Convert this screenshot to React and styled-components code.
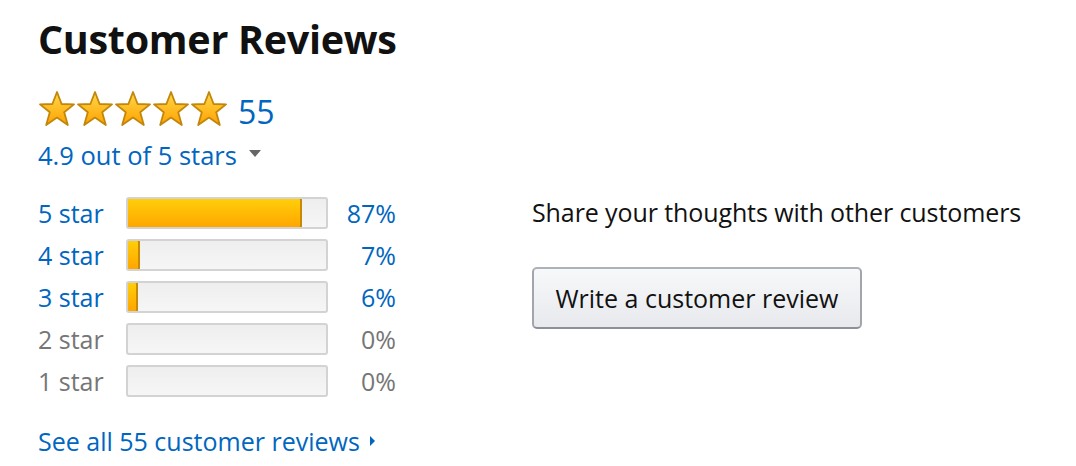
import React from 'react'
import styled, { createGlobalStyle } from 'styled-components'

const GlobalStyle = createGlobalStyle`
  body {
    margin: 0;
    background: #fff;
    font-family: 'Open Sans', 'DejaVu Sans', sans-serif;
  }
`

const Page = styled.section`
  padding: 14px 0 0 38px;
  color: #111;
`

const Title = styled.h2`
  margin: 0;
  font-size: 39.5px;
  line-height: 50px;
  font-weight: bold;
  letter-spacing: -0.3px;
`

const StarLine = styled.div`
  display: flex;
  align-items: center;
  margin-top: 26px;
  height: 38px;
`

const Stars = styled.div`
  display: flex;
`

const Count = styled.a`
  color: #0066c0;
  font-size: 32px;
  margin-left: 10px;
  margin-top: 4px;
`

const Rating = styled.a`
  display: flex;
  align-items: center;
  margin-top: 10px;
  color: #0066c0;
  font-size: 25.5px;
  line-height: 34px;
`

const Caret = styled.span`
  display: inline-block;
  margin-left: 12px;
  margin-top: -4px;
  border-left: 6px solid transparent;
  border-right: 6px solid transparent;
  border-top: 7px solid #666;
`

const Body = styled.div`
  display: flex;
  margin-top: 24px;
`

const Histogram = styled.div`
  display: flex;
  flex-direction: column;
  gap: 10px;
  width: 358px;
`

const Row = styled.div`
  display: grid;
  grid-template-columns: 88px 202px 1fr;
  align-items: center;
  height: 32px;
  font-size: 25px;
  color: ${p => (p.$active ? '#0066c0' : '#767676')};
`

const Track = styled.div`
  height: 32px;
  box-sizing: border-box;
  border: 2px solid #d3d3d3;
  border-radius: 3px;
  background: linear-gradient(#eeeeee, #f6f6f6);
  overflow: hidden;
`

const Fill = styled.div`
  box-sizing: border-box;
  margin: -2px 0 0 -2px;
  height: 32px;
  border: 2px solid #c88a00;
  border-radius: 3px;
  background: linear-gradient(#ffce0a, #ffa600);
`

const Pct = styled.span`
  text-align: right;
`

const Aside = styled.div`
  margin-left: 136px;
  display: flex;
  flex-direction: column;
  align-items: flex-start;
`

const Prompt = styled.div`
  font-size: 25px;
  line-height: 32px;
  letter-spacing: -0.1px;
  color: #111;
`

const WriteButton = styled.button`
  margin-top: 39px;
  width: 330px;
  height: 62px;
  box-sizing: border-box;
  border: 2px solid #adb1b8;
  border-color: #adb1b8 #a2a6ac #8d9096;
  border-radius: 5px;
  background: linear-gradient(#f7f8fa, #e7e9ec);
  font-family: inherit;
  font-size: 25px;
  color: #111;
  padding: 0;
`

const SeeAll = styled.a`
  display: flex;
  align-items: center;
  margin-top: 29px;
  color: #0066c0;
  font-size: 25px;
  line-height: 32px;
`

const RightCaret = styled.span`
  display: inline-block;
  margin-left: 10px;
  border-top: 5px solid transparent;
  border-bottom: 5px solid transparent;
  border-left: 5px solid #0066c0;
`

const Star = () => (
  <svg width="38" height="38" viewBox="0 0 38 38">
    <defs>
      <linearGradient id="starGrad" x1="0" y1="0" x2="0" y2="1">
        <stop offset="0" stopColor="#ffd84a" />
        <stop offset="1" stopColor="#ffa200" />
      </linearGradient>
    </defs>
    <polygon
      points="19,2 23.6,14 36,14.4 26.2,22.2 29.8,35 19,27.6 8.2,35 11.8,22.2 2,14.4 14.4,14"
      fill="url(#starGrad)"
      stroke="#c2860b"
      strokeWidth="1.8"
      strokeLinejoin="round"
    />
  </svg>
)

const rows = [
  { label: '5 star', pct: 87 },
  { label: '4 star', pct: 7 },
  { label: '3 star', pct: 6 },
  { label: '2 star', pct: 0 },
  { label: '1 star', pct: 0 },
]

const App = () => (
  <Page>
    <GlobalStyle />
    <Title>Customer Reviews</Title>
    <StarLine>
      <Stars>
        {[0, 1, 2, 3, 4].map(i => <Star key={i} />)}
      </Stars>
      <Count>55</Count>
    </StarLine>
    <Rating>
      4.9 out of 5 stars
      <Caret />
    </Rating>
    <Body>
      <Histogram>
        {rows.map(r => (
          <Row key={r.label} $active={r.pct > 0}>
            <span>{r.label}</span>
            <Track>
              {r.pct > 0 && <Fill style={{ width: `${r.pct * 2.02}px` }} />}
            </Track>
            <Pct>{r.pct}%</Pct>
          </Row>
        ))}
      </Histogram>
      <Aside>
        <Prompt>Share your thoughts with other customers</Prompt>
        <WriteButton>Write a customer review</WriteButton>
      </Aside>
    </Body>
    <SeeAll>
      See all 55 customer reviews
      <RightCaret />
    </SeeAll>
  </Page>
)

export default App
